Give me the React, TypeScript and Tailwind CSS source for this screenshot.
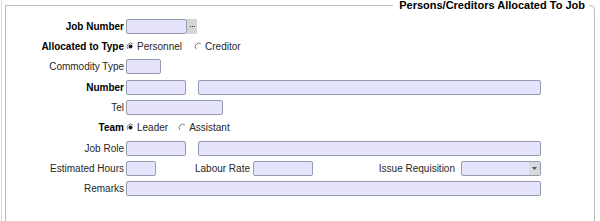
import type { ReactNode } from "react";

const field = "h-[15px] rounded-[2px] border border-[#939bb0] bg-[#e6e4fc] shrink-0";

function Radio({ checked }: { checked?: boolean }) {
  return (
    <svg width="9" height="9" viewBox="0 0 9 9" className="shrink-0">
      <path d="M2.03 6.97A3.5 3.5 0 0 1 6.97 2.03" fill="none" stroke="#808080" strokeWidth="1" />
      {checked && <circle cx="4.5" cy="4.5" r="2" fill="#1a1a1a" />}
    </svg>
  );
}

type RowProps = {
  label: string;
  bold?: boolean;
  className?: string;
  children: ReactNode;
};

function Row({ label, bold, className, children }: RowProps) {
  return (
    <div className={`flex h-[15px] items-center ${className ?? ""}`}>
      <div
        className={`w-[119px] shrink-0 pr-px text-right leading-[15px] ${
          bold ? "font-bold text-black" : "text-[#262626]"
        }`}
      >
        {label}
      </div>
      <div className="ml-px flex items-center">{children}</div>
    </div>
  );
}

export default function App() {
  return (
    <div className="flex h-[221px] w-[600px] overflow-hidden bg-white pl-px font-['Liberation_Sans',Arial,sans-serif] text-[10px]">
      <div className="flex h-full border-l border-[#d8d8d8] pl-[3px]">
        <fieldset className="h-[232px] w-[590px] rounded-tr-[5px] border border-b-0 border-[#bdbdbd] px-0 pt-[8px]">
          <legend className="ml-auto mr-[5px] pl-[6px] pr-[4px] text-[11px] font-bold leading-[11px] text-black">
            Persons/Creditors Allocated To Job
          </legend>

          <div className="flex flex-col gap-[5px]">
            <Row label="Job Number" bold>
              <div className={`${field} w-[61px]`} />
              <div className="flex h-[15px] w-[10px] items-center justify-center gap-px bg-[#d6d6d6]">
                <span className="h-px w-px bg-[#333]" />
                <span className="h-px w-px bg-[#333]" />
                <span className="h-px w-px bg-[#333]" />
              </div>
            </Row>

            <Row label="Allocated to Type" bold>
              <Radio checked />
              <span className="ml-[2px] mr-[12px] text-[#262626]">Personnel</span>
              <Radio />
              <span className="ml-[2px] text-[#262626]">Creditor</span>
            </Row>

            <Row label="Commodity Type">
              <div className={`${field} w-[35px]`} />
            </Row>

            <Row label="Number" bold className="mt-px">
              <div className={`${field} w-[60px]`} />
              <div className={`${field} ml-[12px] w-[343px]`} />
            </Row>

            <Row label="Tel">
              <div className={`${field} w-[97px]`} />
            </Row>

            <Row label="Team" bold>
              <Radio checked />
              <span className="ml-[2px] mr-[10px] text-[#262626]">Leader</span>
              <Radio />
              <span className="ml-[2px] text-[#262626]">Assistant</span>
            </Row>

            <Row label="Job Role" className="mt-px">
              <div className={`${field} w-[60px]`} />
              <div className={`${field} ml-[12px] w-[343px]`} />
            </Row>

            <Row label="Estimated Hours">
              <div className={`${field} w-[30px]`} />
              <div className="w-[97px] shrink-0 pr-[3px] text-right text-[#262626]">Labour Rate</div>
              <div className={`${field} w-[60px]`} />
              <div className="w-[148px] shrink-0 pr-[6px] text-right text-[#262626]">Issue Requisition</div>
              <div className={`${field} flex w-[80px] justify-end overflow-hidden`}>
                <div className="flex h-full w-[11px] items-center justify-center bg-[#d9d9dc]">
                  <svg width="5" height="3" viewBox="0 0 5 3">
                    <path d="M0 0H5L2.5 3Z" fill="#555" />
                  </svg>
                </div>
              </div>
            </Row>

            <Row label="Remarks">
              <div className={`${field} w-[415px]`} />
            </Row>
          </div>
        </fieldset>
      </div>
    </div>
  );
}
